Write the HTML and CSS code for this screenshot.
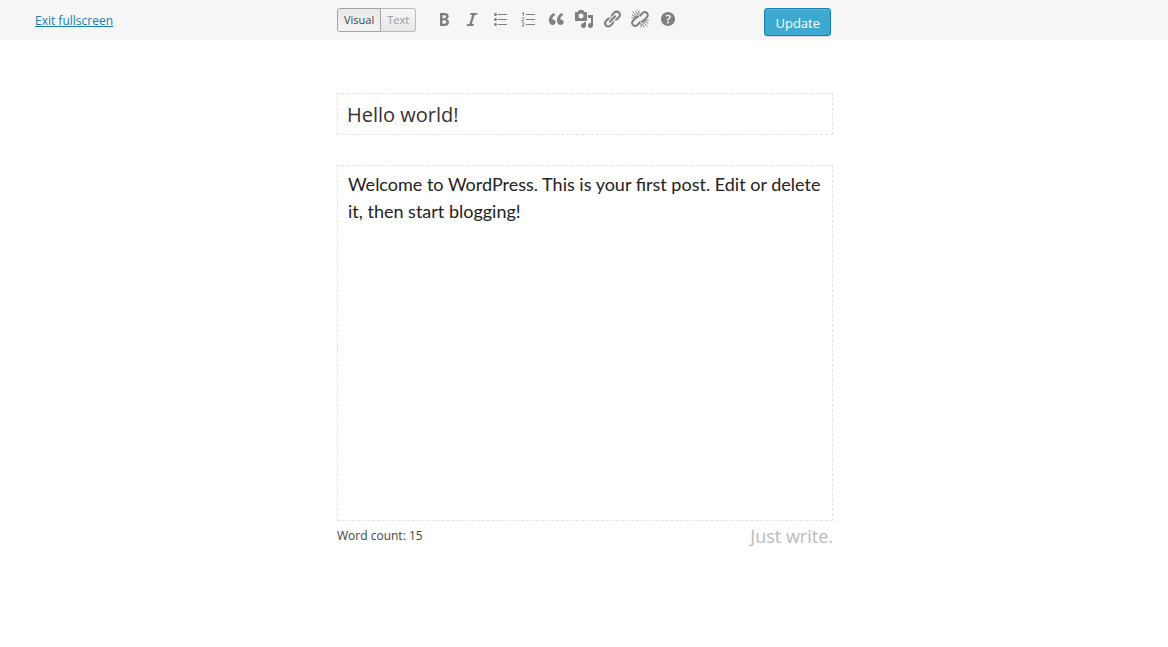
FILE: index.html
```html
<!DOCTYPE html>
<html lang="en">
<head>
<meta charset="utf-8">
<meta name="viewport" content="width=device-width, initial-scale=1">
<title>Edit Post</title>
<link rel="stylesheet" href="styles.css">
</head>
<body>
<header class="topbar">
  <nav class="exit"><a class="exit-link" href="#">Exit fullscreen</a></nav>
  <div class="tools">
    <div class="modes" role="group" aria-label="Editor mode">
      <button class="mode mode-active" type="button">Visual</button><button class="mode" type="button">Text</button>
    </div>
    <div class="toolbar" role="toolbar" aria-label="Formatting">
      <button class="tool" type="button" aria-label="Bold"><svg class="icon" viewBox="0 0 20 20"><path d="M6 4v13h4.54c1.37 0 2.46-.33 3.26-1 .8-.66 1.2-1.58 1.2-2.77 0-.84-.17-1.51-.51-2.01s-.9-.85-1.67-1.03v-.09c.57-.1 1.02-.4 1.36-.9s.51-1.13.51-1.91c0-1.14-.39-1.98-1.17-2.5C12.75 4.26 11.5 4 9.78 4H6zm2.57 5.15V6.26h1.36c.73 0 1.27.11 1.61.32.34.22.51.58.51 1.07 0 .54-.16.92-.47 1.15s-.82.35-1.51.35h-1.5zm0 2.19h1.6c1.44 0 2.16.53 2.16 1.61 0 .6-.17 1.05-.51 1.34s-.86.43-1.57.43H8.57v-3.38z"/></svg></button>
      <button class="tool" type="button" aria-label="Italic"><svg class="icon" viewBox="0 0 20 20"><path d="M14.78 6h-2.13l-2.8 9h2.12l-.62 2H4.6l.62-2h2.14l2.8-9H8.03l.62-2h6.75z"/></svg></button>
      <button class="tool" type="button" aria-label="Bulleted list"><svg class="icon" viewBox="0 0 20 20"><path d="M5.5 7C4.67 7 4 6.33 4 5.5 4 4.68 4.67 4 5.5 4 6.32 4 7 4.68 7 5.5 7 6.33 6.32 7 5.5 7zM8 5h9v1H8V5zm-2.5 7c-.83 0-1.5-.67-1.5-1.5C4 9.68 4.67 9 5.5 9c.82 0 1.5.68 1.5 1.5 0 .83-.68 1.5-1.5 1.5zM8 10h9v1H8v-1zm-2.5 7c-.83 0-1.5-.67-1.5-1.5 0-.82.67-1.5 1.5-1.5.82 0 1.5.68 1.5 1.5 0 .83-.68 1.5-1.5 1.5zM8 15h9v1H8v-1z"/></svg></button>
      <button class="tool" type="button" aria-label="Numbered list"><svg class="icon" viewBox="0 0 20 20"><path d="M8 5h9v1H8zM8 10h9v1H8zM8 15h9v1H8z"/><path class="line-thin" d="M4 4.3l1.4-.8V7M3.8 9c.8-.9 2.2-.5 2 .5-.1.8-1.2 1.3-2 2.3H6M3.9 13.7c1-.5 2-.1 1.9.7 0 .6-.6.9-1.2.9.8 0 1.4.4 1.4 1 0 1-1.2 1.3-2.2.8"/></svg></button>
      <button class="tool" type="button" aria-label="Blockquote"><svg class="icon" viewBox="0 0 20 20"><path d="M9.49 13.22c0-.74-.2-1.38-.61-1.9-.62-.78-1.83-.88-2.53-.72-.29-1.65 1.11-3.75 2.92-4.65L7.88 4c-2.73 1.3-5.42 4.28-4.96 8.05C3.21 14.43 4.59 16 6.54 16c.85 0 1.56-.25 2.12-.75s.83-1.18.83-2.03zm8.05 0c0-.74-.2-1.38-.61-1.9-.63-.78-1.83-.88-2.53-.72-.29-1.65 1.11-3.75 2.92-4.65L15.93 4c-2.73 1.3-5.41 4.28-4.95 8.05.29 2.38 1.66 3.95 3.61 3.95.85 0 1.56-.25 2.12-.75s.83-1.18.83-2.03z"/></svg></button>
      <button class="tool" type="button" aria-label="Add media"><svg class="icon" viewBox="0 0 20 20"><path d="M13 11V4c0-.55-.45-1-1-1h-1.67L9 1H5L3.67 3H2c-.55 0-1 .45-1 1v7c0 .55.45 1 1 1h10c.55 0 1-.45 1-1zM7 4.5c1.38 0 2.5 1.12 2.5 2.5S8.38 9.5 7 9.5 4.5 8.38 4.5 7 5.62 4.5 7 4.5zM14 6h5v10.5c0 1.38-1.12 2.5-2.5 2.5S14 17.88 14 16.5s1.12-2.5 2.5-2.5c.17 0 .34.02.5.05V9h-3V6zm-4 8.05V13h2v3.5c0 1.38-1.12 2.5-2.5 2.5S7 17.88 7 16.5 8.12 14 9.5 14c.17 0 .34.02.5.05z"/></svg></button>
      <button class="tool" type="button" aria-label="Insert link"><svg class="icon" viewBox="0 0 20 20"><path d="M17.74 2.76c1.68 1.69 1.68 4.41 0 6.1l-1.53 1.52c-1.12 1.12-2.7 1.47-4.14 1.09l2.62-2.61.76-.77.76-.76c.84-.84.84-2.2 0-3.04-.84-.85-2.2-.85-3.04 0l-.77.76-3.38 3.38c-.37-1.44-.02-3.02 1.1-4.14l1.52-1.53c1.69-1.68 4.42-1.68 6.1 0zM8.59 13.43l5.34-5.34c.42-.42.42-1.1 0-1.52-.44-.43-1.13-.39-1.53 0l-5.33 5.34c-.42.42-.42 1.1 0 1.52.44.43 1.13.39 1.52 0zm-.76 2.29l4.14-4.15c.38 1.44.03 3.02-1.09 4.14l-1.52 1.53c-1.69 1.68-4.41 1.68-6.1 0-1.68-1.68-1.68-4.42 0-6.1l1.53-1.52c1.12-1.12 2.7-1.47 4.14-1.1l-4.14 4.15c-.85.84-.85 2.2 0 3.05.84.84 2.2.84 3.04 0z"/></svg></button>
      <button class="tool" type="button" aria-label="Remove link"><svg class="icon" viewBox="0 0 20 20"><path class="line" d="M9.6 7.200l3-3.200a3 3 0 0 1 4.300 4.300L13.800 11.400q-1.300 1-2.600.4M8.800 8.200q-1.300-.6-2.600.4L3.100 11.700a3 3 0 0 0 4.300 4.300L10.400 12.800"/><path class="line-ray" d="M2.500 2.500l5.500 5.500M5.800 1.800l2.400 4.900M1.800 5.800l4.900 2.400M8.700 1.400l.4 4M1.400 8.700l4 .3M12 12l5.500 5.500M11.800 13.300l2.400 4.900M13.300 11.800l4.900 2.400M10.900 14.600l.4 4M14.600 11l4 .3"/></svg></button>
      <button class="tool" type="button" aria-label="Help"><svg class="icon" viewBox="0 0 20 20"><path d="M17 10c0-3.87-3.14-7-7-7-3.87 0-7 3.13-7 7s3.13 7 7 7c3.86 0 7-3.13 7-7zm-6.3 1.48H9.14v-.43c0-.38.08-.7.24-.98s.46-.57.88-.89c.41-.29.68-.53.81-.71.14-.18.2-.39.2-.62 0-.25-.09-.44-.28-.58-.19-.13-.45-.19-.79-.19-.58 0-1.25.19-2 .57l-.64-1.28c.87-.49 1.8-.74 2.77-.74.81 0 1.45.2 1.92.58.48.39.71.91.71 1.55 0 .43-.09.8-.29 1.11-.19.32-.57.67-1.11 1.06-.38.28-.61.49-.71.63-.1.15-.15.34-.15.57v.35zm-1.47 2.74c-.18-.17-.27-.42-.27-.73 0-.33.08-.58.26-.75s.43-.25.77-.25c.32 0 .57.09.75.26s.27.42.27.74c0 .3-.09.55-.27.72-.18.18-.43.27-.75.27-.33 0-.58-.09-.76-.26z"/></svg></button>
    </div>
    <button class="update" type="submit">Update</button>
  </div>
</header>
<main class="page">
  <div class="editor">
    <input class="title" type="text" aria-label="Title" value="Hello world!">
    <textarea class="content" aria-label="Post content" spellcheck="false">Welcome to WordPress. This is your first post. Edit or delete it, then start blogging!</textarea>
    <footer class="status">
      <span>Word count: 15</span>
      <span class="tagline">Just write.</span>
    </footer>
  </div>
</main>
</body>
</html>
```
FILE: styles.css
```css
* {
  box-sizing: border-box;
}

body {
  margin: 0;
  background: #fff;
  color: #444;
  font: 12px/18px "Open Sans", sans-serif;
}

button,
input,
textarea {
  margin: 0;
  font-family: inherit;
}

.topbar,
.page {
  display: grid;
  grid-template-columns: 1fr minmax(0, 496px) 1fr;
  padding-left: 2px;
}

.topbar {
  height: 40px;
  background: #f6f6f6;
}

.exit {
  padding: 12px 0 0 33px;
}

.exit-link {
  color: #1780ab;
}

.tools {
  display: flex;
  align-items: flex-start;
  padding: 8px 2px 0 0;
}

.modes {
  display: flex;
}

.mode {
  height: 24px;
  padding: 0 6px;
  border: 1px solid #bbb;
  border-left: 0;
  border-radius: 0 3px 3px 0;
  background: linear-gradient(#f5f5f5, #e8e8e8);
  color: #999;
  font-size: 11px;
  line-height: 20px;
}

.mode-active {
  border: 1px solid #a3a3a3;
  border-radius: 3px 0 0 3px;
  background: linear-gradient(#e8e8e8, #f5f5f5);
  color: #444;
}

.toolbar {
  display: flex;
  gap: 8px;
  padding: 1px 0 0 18px;
}

.tool {
  width: 20px;
  height: 20px;
  padding: 0;
  border: 0;
  background: none;
}

.icon {
  display: block;
  width: 20px;
  height: 20px;
  fill: #808080;
}

.line,
.line-thin,
.line-ray {
  fill: none;
  stroke: #808080;
}

.line {
  stroke-width: 2;
}

.line-thin,
.line-ray {
  stroke-width: 1;
}

.update {
  height: 28px;
  margin-left: auto;
  padding: 1px 10px 0;
  border: 1px solid #1780ab;
  border-radius: 3px;
  background: #3ea9d0;
  box-shadow: inset 0 1px 0 rgba(120, 200, 230, 0.5), 0 1px 0 rgba(0, 0, 0, 0.12);
  color: #fff;
  font-size: 13px;
  line-height: 26px;
}

.editor {
  grid-column: 2;
  display: flex;
  flex-direction: column;
  padding-top: 53px;
}

.title,
.content {
  width: 100%;
  border: 1px dashed #e3e3e3;
  outline: 0;
  background: none;
}

.title {
  height: 42px;
  margin-bottom: 30px;
  padding: 0 9px;
  color: #333;
  font-size: 20px;
}

.content {
  height: 356px;
  padding: 5px 10px;
  resize: none;
  color: #222;
  font: 18px/27px Lato, sans-serif;
}

.status {
  display: flex;
  justify-content: space-between;
  align-items: center;
  padding-top: 5px;
  line-height: 20px;
}

.tagline {
  color: #bbb;
  font-size: 18px;
}
```
